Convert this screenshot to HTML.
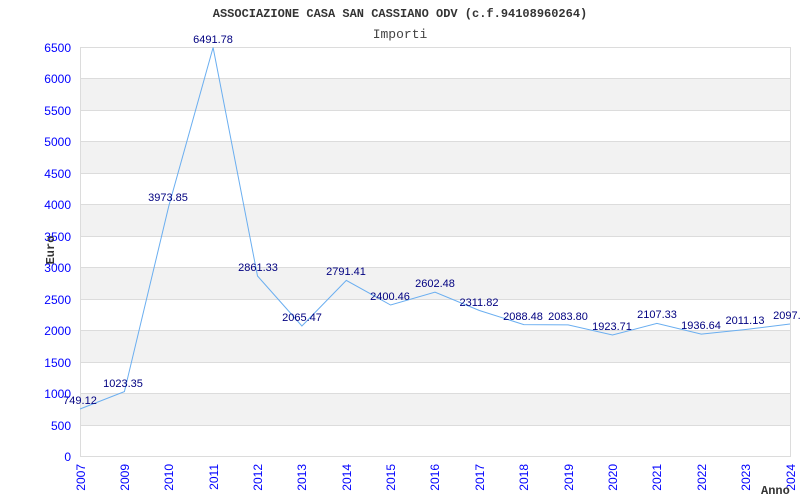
<!DOCTYPE html><html><head><meta charset="utf-8"><style>body{margin:0;background:#fff}svg{display:block}</style></head><body>
<svg width="800" height="500" xmlns="http://www.w3.org/2000/svg">
<rect width="800" height="500" fill="#fff"/>
<g fill="#f2f2f2">
<rect x="80" y="78.5" width="710" height="31.5"/>
<rect x="80" y="141.5" width="710" height="31.5"/>
<rect x="80" y="204.5" width="710" height="31.5"/>
<rect x="80" y="267.5" width="710" height="31.5"/>
<rect x="80" y="330.5" width="710" height="31.5"/>
<rect x="80" y="393.5" width="710" height="31.5"/>
</g>
<g stroke="#dcdcdc" stroke-width="1">
<line x1="80" x2="790" y1="47.5" y2="47.5"/><line x1="80" x2="790" y1="78.5" y2="78.5"/><line x1="80" x2="790" y1="110.5" y2="110.5"/><line x1="80" x2="790" y1="141.5" y2="141.5"/><line x1="80" x2="790" y1="173.5" y2="173.5"/><line x1="80" x2="790" y1="204.5" y2="204.5"/><line x1="80" x2="790" y1="236.5" y2="236.5"/><line x1="80" x2="790" y1="267.5" y2="267.5"/><line x1="80" x2="790" y1="299.5" y2="299.5"/><line x1="80" x2="790" y1="330.5" y2="330.5"/><line x1="80" x2="790" y1="362.5" y2="362.5"/><line x1="80" x2="790" y1="393.5" y2="393.5"/><line x1="80" x2="790" y1="425.5" y2="425.5"/><line x1="80" x2="790" y1="456.5" y2="456.5"/>
<line x1="80.5" x2="80.5" y1="47" y2="457"/><line x1="790.5" x2="790.5" y1="47" y2="457"/>
</g>
<polyline fill="none" stroke="#6aaef0" stroke-width="1" points="80,409 124.4,391.6 168.8,206 213.1,47.5 257.5,276 301.9,326 346.3,280.4 390.6,305 435,292.2 479.4,310.5 523.8,324.6 568.1,324.9 612.5,335 656.9,323.4 701.3,334.1 745.6,329.5 790,324"/>
<g font-family="Liberation Sans, sans-serif" font-size="11" fill="#000080" text-anchor="middle">
<text x="80" y="404">749.12</text><text x="123" y="387">1023.35</text><text x="168" y="201">3973.85</text><text x="213" y="43">6491.78</text><text x="258" y="271">2861.33</text><text x="302" y="321">2065.47</text><text x="346" y="275">2791.41</text><text x="390" y="300">2400.46</text><text x="435" y="287">2602.48</text><text x="479" y="306">2311.82</text><text x="523" y="320">2088.48</text><text x="568" y="320">2083.80</text><text x="612" y="330">1923.71</text><text x="657" y="318">2107.33</text><text x="701" y="329">1936.64</text><text x="745" y="324">2011.13</text><text x="790" y="319">2097.5</text>
</g>
<g font-family="Liberation Sans, sans-serif" font-size="12" fill="#0000ff" text-anchor="end">
<text x="71" y="52">6500</text><text x="71" y="83">6000</text><text x="71" y="115">5500</text><text x="71" y="146">5000</text><text x="71" y="178">4500</text><text x="71" y="209">4000</text><text x="71" y="241">3500</text><text x="71" y="272">3000</text><text x="71" y="304">2500</text><text x="71" y="335">2000</text><text x="71" y="367">1500</text><text x="71" y="398">1000</text><text x="71" y="430">500</text><text x="71" y="461">0</text>
</g>
<g font-family="Liberation Sans, sans-serif" font-size="12" fill="#0000ff" text-anchor="end">
<text transform="translate(85,464) rotate(-90)">2007</text><text transform="translate(129,464) rotate(-90)">2009</text><text transform="translate(173,464) rotate(-90)">2010</text><text transform="translate(218,464) rotate(-90)">2011</text><text transform="translate(262,464) rotate(-90)">2012</text><text transform="translate(306,464) rotate(-90)">2013</text><text transform="translate(351,464) rotate(-90)">2014</text><text transform="translate(395,464) rotate(-90)">2015</text><text transform="translate(439,464) rotate(-90)">2016</text><text transform="translate(484,464) rotate(-90)">2017</text><text transform="translate(528,464) rotate(-90)">2018</text><text transform="translate(573,464) rotate(-90)">2019</text><text transform="translate(617,464) rotate(-90)">2020</text><text transform="translate(661,464) rotate(-90)">2021</text><text transform="translate(706,464) rotate(-90)">2022</text><text transform="translate(750,464) rotate(-90)">2023</text><text transform="translate(795,464) rotate(-90)">2024</text>
</g>
<text x="400" y="17" text-anchor="middle" font-family="Liberation Mono, monospace" font-size="12" font-weight="bold" fill="#333">ASSOCIAZIONE CASA SAN CASSIANO ODV (c.f.94108960264)</text>
<text x="400" y="38" text-anchor="middle" font-family="Liberation Mono, monospace" font-size="13" fill="#444">Importi</text>
<text transform="translate(54,250) rotate(-90)" text-anchor="middle" font-family="Liberation Mono, monospace" font-size="12" font-weight="bold" fill="#333">Euro</text>
<text x="761" y="494" font-family="Liberation Mono, monospace" font-size="12" font-weight="bold" fill="#333">Anno</text>
</svg>
</body></html>
